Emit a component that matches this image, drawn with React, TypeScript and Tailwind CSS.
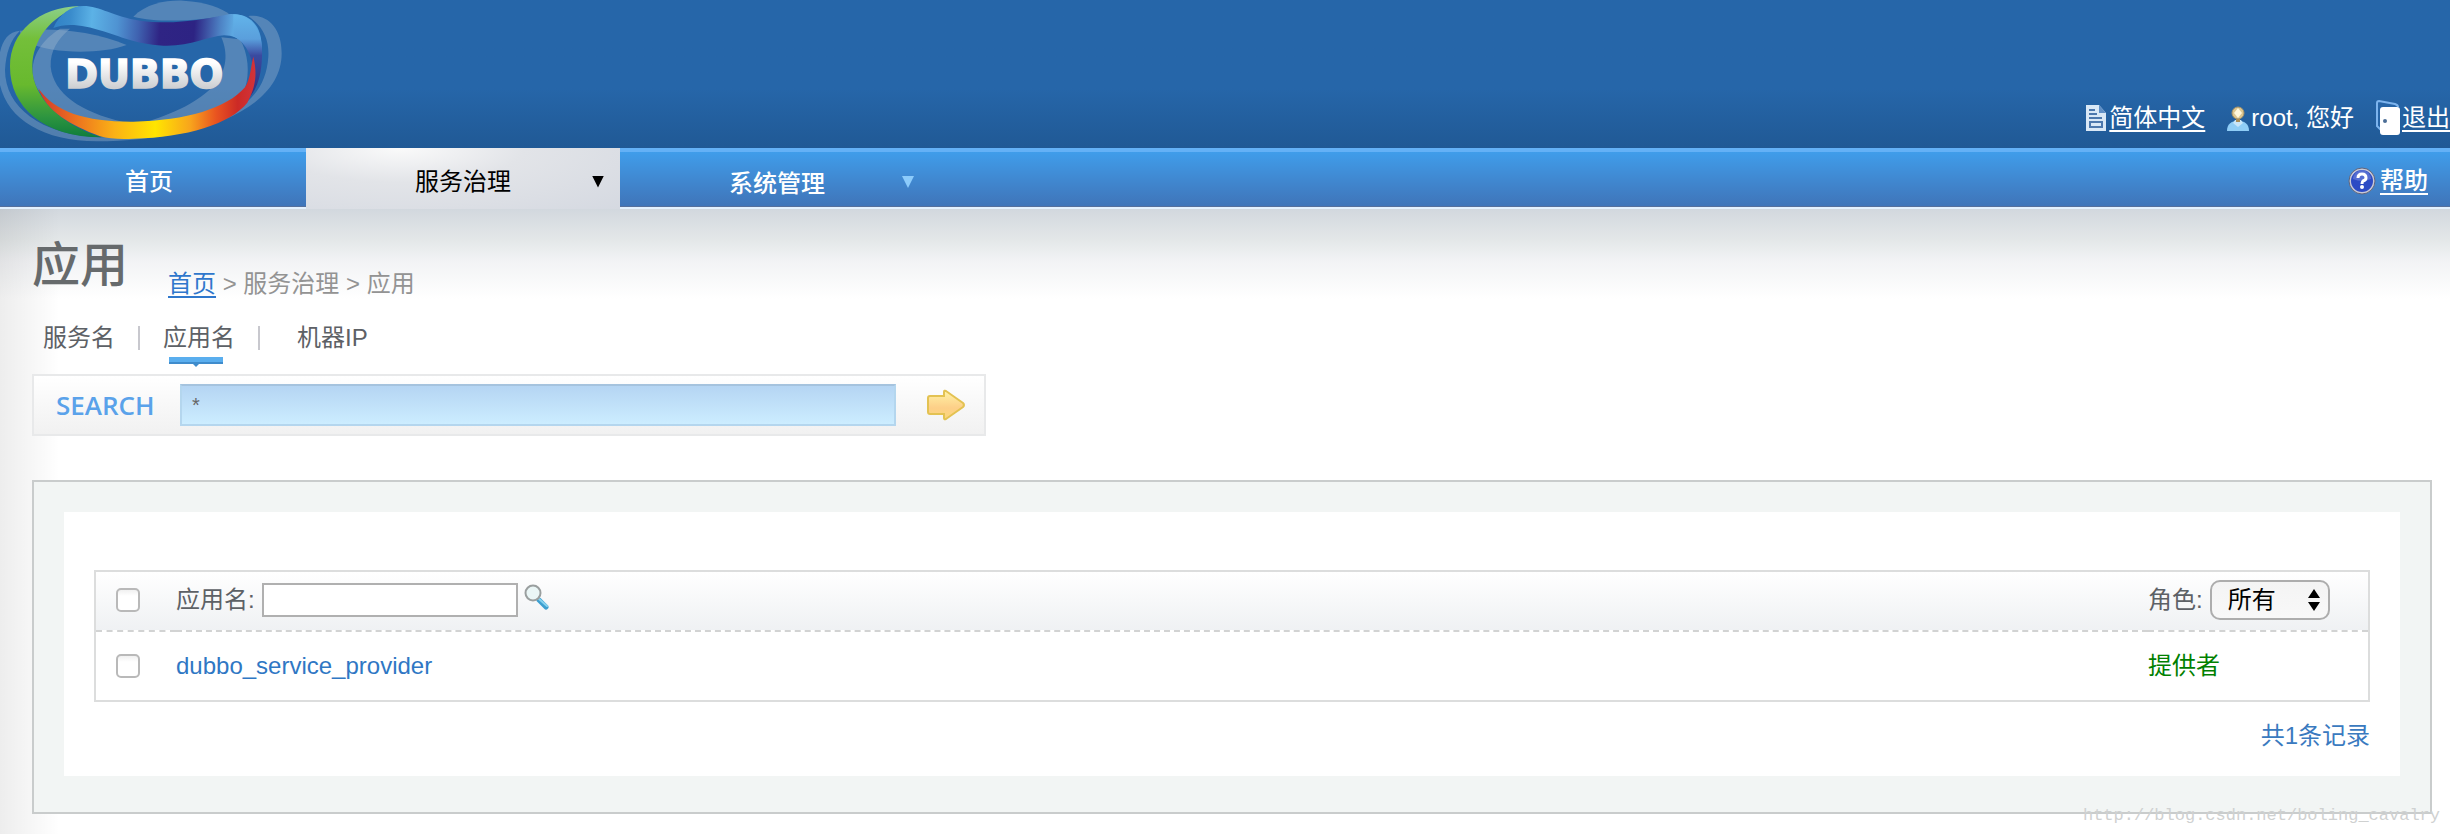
import { useState } from "react"

const FONT = "font-['Liberation_Sans','Noto_Sans_CJK_SC',sans-serif]"

function Logo() {
  return (
    <svg viewBox="0 0 855 444" className="h-[148px] w-[285px]" role="img" aria-label="Dubbo">
      <defs>
        <linearGradient id="green" x1="0" y1="0" x2="0" y2="1">
          <stop offset="0" stopColor="#8cd08a" />
          <stop offset="0.25" stopColor="#74bf3a" />
          <stop offset="0.6" stopColor="#68b92e" />
          <stop offset="0.85" stopColor="#2c9440" />
          <stop offset="1" stopColor="#0f7d3c" />
        </linearGradient>
        <linearGradient id="blue" gradientUnits="userSpaceOnUse" x1="150" y1="20" x2="790" y2="70">
          <stop offset="0" stopColor="#2f7fc4" />
          <stop offset="0.1" stopColor="#3a8ccc" />
          <stop offset="0.2" stopColor="#5cb2e6" />
          <stop offset="0.32" stopColor="#4f93d2" />
          <stop offset="0.42" stopColor="#3f62b0" />
          <stop offset="0.52" stopColor="#2f2484" />
          <stop offset="0.68" stopColor="#2d2383" />
          <stop offset="0.8" stopColor="#4d82c4" />
          <stop offset="0.88" stopColor="#62b4ea" />
          <stop offset="1" stopColor="#4d9cdc" />
        </linearGradient>
        <linearGradient id="tail" x1="0" y1="0" x2="0" y2="1">
          <stop offset="0" stopColor="#62b4ea" />
          <stop offset="0.3" stopColor="#5a9fdc" />
          <stop offset="0.5" stopColor="#3a4aa0" />
          <stop offset="1" stopColor="#31307e" />
        </linearGradient>
        <linearGradient id="warm" gradientUnits="userSpaceOnUse" x1="115" y1="0" x2="765" y2="0">
          <stop offset="0" stopColor="#d3382a" />
          <stop offset="0.18" stopColor="#ec741f" />
          <stop offset="0.35" stopColor="#fbb116" />
          <stop offset="0.54" stopColor="#ffe500" />
          <stop offset="0.7" stopColor="#f8a51c" />
          <stop offset="0.82" stopColor="#e95420" />
          <stop offset="0.92" stopColor="#cc2a26" />
          <stop offset="1" stopColor="#d2333a" />
        </linearGradient>
        <linearGradient id="silver" x1="0" y1="0" x2="0" y2="1">
          <stop offset="0.25" stopColor="#ffffff" />
          <stop offset="0.85" stopColor="#c9cbce" />
        </linearGradient>
      </defs>
      <g fill="#a5bdd2" fillOpacity="0.36">
        <path d="M60 92C10 95 -5 150 -5 210C-5 340 110 424 290 424C540 424 845 350 845 160C845 80 800 42 745 48C790 80 808 120 805 170C800 250 760 300 700 335C600 390 480 412 300 412C120 405 15 320 15 210C18 160 30 120 60 92Z" />
        <path d="M60 92C140 82 280 90 380 135C300 165 150 160 90 130C72 120 60 105 60 92Z" />
        <path d="M400 50C440 10 500 0 550 2C620 5 665 25 690 44C600 62 480 70 400 50Z" />
        <path d="M180 86C110 130 75 200 115 270C170 345 260 362 370 366C240 335 160 280 152 200C150 150 175 115 210 86Z" />
        <path d="M664 112C705 210 650 300 440 366C580 362 690 330 735 265C750 220 745 160 720 118Z" />
      </g>
      <path fill="url(#green)" d="M240 18C115 22 30 95 30 200C30 320 130 412 305 412C200 380 95 300 97 200C98 120 150 50 240 18Z" />
      <path fill="url(#blue)" d="M160 84C178 42 212 18 250 18C300 18 340 50 420 62C520 76 610 58 690 42C750 40 785 75 785 140C785 158 778 172 764 182C756 146 722 106 672 106C620 110 570 140 490 137C400 132 360 108 310 94C250 74 200 68 160 84Z" />
      <path fill="url(#tail)" d="M700 43C760 45 790 95 786 170C784 230 770 265 750 290C768 235 768 145 700 108Z" />
      <path fill="url(#warm)" d="M115 265C165 338 260 366 400 365C560 362 680 325 735 262C752 235 752 200 760 170C772 220 768 260 742 308C690 372 560 412 400 416C360 418 325 416 300 409C210 375 140 335 115 265Z" />
      <text
        x="196"
        y="264"
        fontSize="118"
        fontWeight="bold"
        fontFamily="DejaVu Sans, sans-serif"
        fill="url(#silver)"
        stroke="url(#silver)"
        strokeWidth="5"
      >
        DUBBO
      </text>
    </svg>
  )
}

function PageIcon() {
  return (
    <svg viewBox="0 0 22 28" className="h-[28px] w-[22px]" aria-hidden="true">
      <path d="M1 1h13l7 8v18H1z" fill="#d9e8f6" />
      <path d="M14 1l7 8h-7z" fill="#5f8fc6" />
      <path d="M4 6h6M4 10h8M4 14h13" stroke="#4c78ad" strokeWidth="2" />
      <path d="M5 18h12v5H5z" fill="#d9e8f6" stroke="#4c78ad" strokeWidth="2" />
    </svg>
  )
}

function UserIcon() {
  return (
    <svg viewBox="0 0 22 28" className="h-[28px] w-[22px]" aria-hidden="true">
      <path d="M0 27c0-7 4-10 11-10s11 3 11 10z" fill="#8fcdf6" />
      <path d="M6 19l5 4 5-4-2-3H8z" fill="#c8e6fa" />
      <circle cx="11" cy="9" r="6" fill="#dcc690" stroke="#a99468" strokeWidth="1" />
      <path d="M11 4l4 5-4 5-4-5z" fill="#fff7dc" />
      <path d="M9 15h4v3H9z" fill="#a98d58" />
    </svg>
  )
}

function DoorIcon() {
  return (
    <svg viewBox="0 0 24 36" className="h-[36px] w-[24px]" aria-hidden="true">
      <path d="M5 30L1 26V3q0-2 2-2l16 3q3 1 3 3" fill="#2665a8" stroke="#7db4ee" strokeWidth="2" />
      <rect x="4" y="7" width="20" height="28" rx="3" fill="#fff" />
      <circle cx="9" cy="21" r="2" fill="#4b6d96" />
    </svg>
  )
}

function HelpIcon() {
  return (
    <svg viewBox="0 0 28 28" className="h-[28px] w-[28px]" aria-hidden="true">
      <circle cx="14" cy="14" r="12" fill="#2c4bc4" stroke="#c6c9d8" strokeWidth="2" />
      <circle cx="14" cy="14" r="13" fill="none" stroke="#60657c" strokeWidth="1" />
      <path d="M5 12a9 9 0 0118 0q-9 4-18 0z" fill="#7286dc" fillOpacity="0.6" />
      <path d="M10 11q0-4 4-4t4 4q0 2-3 3-1 1-1 3" fill="none" stroke="#fff" strokeWidth="3" />
      <circle cx="14" cy="20" r="2" fill="#fff" />
    </svg>
  )
}

function GoIcon() {
  return (
    <svg viewBox="0 0 40 32" className="h-[32px] w-[40px]" aria-hidden="true">
      <defs>
        <linearGradient id="go" x1="0" y1="0" x2="0" y2="1">
          <stop offset="0" stopColor="#fff3a6" />
          <stop offset="0.6" stopColor="#fdcf88" />
          <stop offset="1" stopColor="#fbd77a" />
        </linearGradient>
      </defs>
      <path d="M4 7h14V3q0-2 2-1l17 12q2 2 0 4L20 30q-2 1-2-1v-4H4q-2 0-2-2V9q0-2 2-2z" fill="url(#go)" stroke="#e3c252" strokeWidth="2" />
    </svg>
  )
}

function GlassIcon() {
  return (
    <svg viewBox="0 0 25 26" className="h-[26px] w-[25px]" aria-hidden="true">
      <path d="M15 16l7 7" stroke="#3d9fd0" strokeWidth="5" strokeLinecap="round" />
      <path d="M15 15l8 7" stroke="#86d2ee" strokeWidth="2" strokeLinecap="round" />
      <circle cx="9" cy="9" r="7.5" fill="#eaf6f6" stroke="#9a9f9f" strokeWidth="2" />
    </svg>
  )
}

const check =
  "block h-6 w-6 appearance-none rounded-[5px] border-2 border-[#b9b9b9] bg-gradient-to-b from-[#f0f0f0] to-white to-30% checked:bg-[#337ab7]"

export default function App() {
  const [keyword, setKeyword] = useState("*")
  const [name, setName] = useState("")

  const apps = [{ name: "dubbo_service_provider", role: "提供者" }]

  return (
    <div className={`${FONT} relative min-h-screen overflow-hidden bg-white text-2xl leading-6 text-[#5d6166]`}>
      <header className="flex h-[148px] items-end justify-between bg-gradient-to-b from-[#2666a9] from-60% to-[#205995]">
        <Logo />
        <div className="flex items-center pb-3 text-white">
          <a href="#lang" className="flex items-center gap-0.5">
            <PageIcon />
            <span className="underline decoration-2 underline-offset-4">简体中文</span>
          </a>
          <span className="ml-[22px] flex items-center gap-0.5">
            <UserIcon />
            root, 您好
          </span>
          <a href="#logout" className="ml-[22px] flex items-center gap-0.5 whitespace-nowrap">
            <DoorIcon />
            <span className="underline decoration-2 underline-offset-4">退出</span>
          </a>
        </div>
      </header>

      <nav className="flex h-[61px] border-b-2 border-[#e3f1ff] bg-gradient-to-b from-[#3fa0ee] to-[#3f74b8] font-medium text-white shadow-[inset_0_5px_0_-1px_#64b1f6,inset_0_-1px_0_#56709c]">
        <a href="#home" className="flex w-[306px] items-center justify-center pt-2 pr-2">
          首页
        </a>
        <a
          href="#governance"
          className="relative -mb-0.5 flex w-[314px] items-center justify-center bg-[radial-gradient(ellipse_at_30%_0%,#fafafa_0%,#e2e4e8_40%,#d5d9e1_100%)] pt-1.5 font-normal text-black"
        >
          服务治理
          <span className="absolute right-4 h-3 w-3 bg-black [clip-path:polygon(0_0,100%_0,50%_100%)]" />
        </a>
        <a href="#system" className="relative flex w-[314px] items-center justify-center pt-3">
          系统管理
          <span className="absolute top-7 right-5 h-3 w-3 bg-[#8ccbfb] [clip-path:polygon(0_0,100%_0,50%_100%)]" />
        </a>
        <a href="#help" className="mr-[22px] ml-auto flex items-center gap-1 pt-1.5">
          <HelpIcon />
          <span className="underline decoration-2 underline-offset-4">帮助</span>
        </a>
      </nav>

      <main className="bg-[linear-gradient(to_right,#00000012,#00000000_60px),linear-gradient(to_bottom,#d2d8de,#e3e7e8_30px,#f2f3f5_52px,#fff_90px)] pt-[33px] pr-[18px] pb-5 pl-8">
        <div className="flex items-end gap-10">
          <h1 className="pb-1.5 text-5xl leading-[48px] font-medium text-[#666a6c]">应用</h1>
          <p className="text-[#939393]">
            <a href="#home" className="text-[#2f77cc] underline decoration-2 underline-offset-4">
              首页
            </a>{" "}
            &gt; 服务治理 &gt; 应用
          </p>
        </div>

        <nav className="mt-[26px] flex h-8 items-center gap-[23px] pl-[11px]">
          <a href="#service">服务名</a>
          <span className="h-6 w-0.5 bg-[#c8c8ce]" />
          <a href="#app" className="relative">
            应用名
            <svg viewBox="0 0 54 10" className="absolute top-[31px] left-1.5 h-[10px] w-[54px]" aria-hidden="true">
              <path d="M0 0h54v7H0z" fill="#5aaeee" />
              <path d="M0 5h54v2H0zM23 6h8l-4 4z" fill="#3f8ccc" />
            </svg>
          </a>
          <span className="h-6 w-0.5 bg-[#c8c8ce]" />
          <a href="#machine" className="ml-3.5">
            机器IP
          </a>
        </nav>

        <form
          className="mt-5 flex h-[62px] w-[954px] max-w-full items-center border-2 border-[#e8e9ea] bg-gradient-to-b from-white to-[#f1f1f1]"
          onSubmit={(e) => e.preventDefault()}
        >
          <label htmlFor="keyword" className="w-[146px] pl-[22px] font-['Open_Sans',sans-serif] text-[26px] font-semibold text-[#5aa2ea]">
            SEARCH
          </label>
          <input
            id="keyword"
            value={keyword}
            onChange={(e) => setKeyword(e.target.value)}
            className="h-[42px] min-w-0 flex-1 border-2 border-[#b4d6ee] border-t-[#a5c3de] bg-gradient-to-b from-[#b5d5f3] to-[#ccedff] px-[10px] text-xl text-[#666] outline-none"
          />
          <button type="submit" aria-label="搜索" className="flex w-[88px] justify-center pl-3">
            <GoIcon />
          </button>
        </form>

        <section className="mt-11 border-2 border-[#c9cccc] bg-[#f2f5f4] px-[30px] pt-[30px] pb-9">
          <div className="bg-white px-[30px] pt-[58px] pb-[22px]">
            <table className="w-full table-fixed border-separate border-spacing-0 border-2 border-[#dcdddd] text-left">
              <thead>
                <tr className="h-[60px] [&>th]:border-b-2 [&>th]:border-dashed [&>th]:border-[#d2d3d3] [&>th]:bg-gradient-to-b [&>th]:from-white [&>th]:to-[#eff1f3] [&>th]:p-0 [&>th]:pb-0.5 [&>th]:font-normal">
                  <th className="w-20">
                    <input type="checkbox" aria-label="全选" className={`${check} ml-5`} />
                  </th>
                  <th>
                    <div className="flex items-center">
                      <label htmlFor="name">应用名:</label>
                      <input
                        id="name"
                        value={name}
                        onChange={(e) => setName(e.target.value)}
                        className="ml-[7px] h-[34px] w-[256px] border-2 border-[#b0b0b0] bg-white px-2 outline-none"
                      />
                      <button type="button" aria-label="查找" className="ml-1.5 pb-1.5">
                        <GlassIcon />
                      </button>
                    </div>
                  </th>
                  <th className="w-[220px]">
                    <div className="flex items-center">
                      <label htmlFor="role">角色:</label>
                      <span className="relative ml-[7px] flex items-center">
                        <select
                          id="role"
                          className="h-10 w-[120px] appearance-none rounded-[10px] border-2 border-[#adadad] bg-gradient-to-b from-[#f4f4f4] to-[#f8f8f8] pl-4 text-black"
                        >
                          <option>所有</option>
                          <option>提供者</option>
                          <option>消费者</option>
                        </select>
                        <svg viewBox="0 0 12 22" className="pointer-events-none absolute right-2.5 h-[22px] w-3" aria-hidden="true">
                          <path d="M6 0l6 9H0zM0 13h12l-6 9z" fill="#000" />
                        </svg>
                      </span>
                    </div>
                  </th>
                </tr>
              </thead>
              <tbody>
                {apps.map((app) => (
                  <tr key={app.name} className="h-[68px] [&>td]:p-0">
                    <td>
                      <input type="checkbox" aria-label={app.name} className={`${check} ml-5`} />
                    </td>
                    <td>
                      <a href="#detail" className="text-[#2f77c4]">
                        {app.name}
                      </a>
                    </td>
                    <td className="text-[#008000]">{app.role}</td>
                  </tr>
                ))}
              </tbody>
            </table>
            <p className="mt-4 text-right leading-9 text-[#3a7abf]">共{apps.length}条记录</p>
          </div>
        </section>
      </main>

      <span className="absolute right-2.5 bottom-1.5 font-['Liberation_Mono',monospace] text-[17px] text-[#cfd1d1]">
        http://blog.csdn.net/boling_cavalry
      </span>
    </div>
  )
}
